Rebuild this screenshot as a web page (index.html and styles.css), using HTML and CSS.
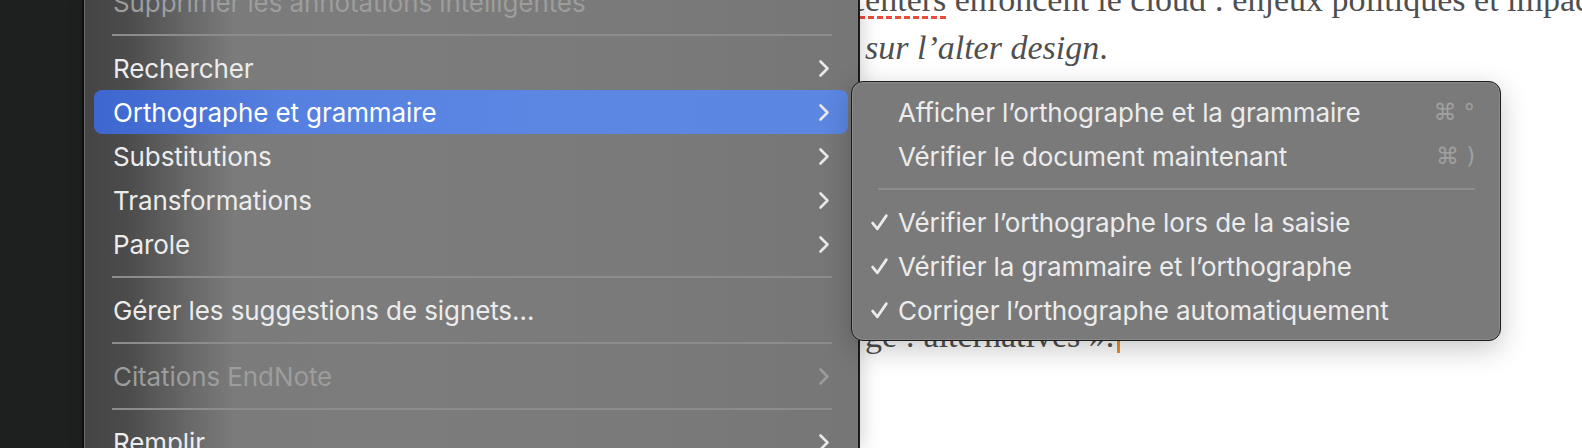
FILE: index.html
```html
<!DOCTYPE html>
<html lang="fr">
<head>
  <meta charset="UTF-8">
  <meta name="viewport" content="width=device-width, initial-scale=1.0">
  <title>Orthographe et grammaire</title>
  <link rel="stylesheet" href="styles.css">
</head>
<body>
  <div class="sidebar"></div>

  <div class="menu">
    <ul class="menu-list">
      <li class="item disabled"><span>Supprimer les annotations intelligentes</span></li>
      <li class="sep"></li>
      <li class="item"><span>Rechercher</span>
        <svg class="chevron" viewBox="0 0 12 18"><path d="M2.5 2 L9.5 9 L2.5 16"/></svg></li>
      <li class="item active"><span>Orthographe et grammaire</span>
        <svg class="chevron" viewBox="0 0 12 18"><path d="M2.5 2 L9.5 9 L2.5 16"/></svg></li>
      <li class="item"><span>Substitutions</span>
        <svg class="chevron" viewBox="0 0 12 18"><path d="M2.5 2 L9.5 9 L2.5 16"/></svg></li>
      <li class="item"><span>Transformations</span>
        <svg class="chevron" viewBox="0 0 12 18"><path d="M2.5 2 L9.5 9 L2.5 16"/></svg></li>
      <li class="item"><span>Parole</span>
        <svg class="chevron" viewBox="0 0 12 18"><path d="M2.5 2 L9.5 9 L2.5 16"/></svg></li>
      <li class="sep"></li>
      <li class="item"><span>Gérer les suggestions de signets…</span></li>
      <li class="sep"></li>
      <li class="item disabled"><span>Citations EndNote</span>
        <svg class="chevron" viewBox="0 0 12 18"><path d="M2.5 2 L9.5 9 L2.5 16"/></svg></li>
      <li class="sep"></li>
      <li class="item"><span>Remplir</span>
        <svg class="chevron" viewBox="0 0 12 18"><path d="M2.5 2 L9.5 9 L2.5 16"/></svg></li>
    </ul>
  </div>

  <div class="doc">
    <div class="doc-text">
      <p class="line first"><span class="misspelled">centers</span> enfoncent le cloud : enjeux politiques et impacts</p>
      <p class="line"><em>sur l’alter design</em>.</p>
      <p class="line last">ge : alternatives ».<span class="caret"></span></p>
    </div>
  </div>

  <div class="submenu">
    <ul class="sub-list">
      <li class="sub-item"><span class="check"></span><span class="label">Afficher l’orthographe et la grammaire</span><span class="shortcut">⌘ °</span></li>
      <li class="sub-item"><span class="check"></span><span class="label">Vérifier le document maintenant</span><span class="shortcut">⌘ )</span></li>
      <li class="sub-sep"></li>
      <li class="sub-item"><span class="check"><svg viewBox="0 0 18 18"><path d="M2.5 9.5 L7 15 L15.5 2.5"/></svg></span><span class="label">Vérifier l’orthographe lors de la saisie</span></li>
      <li class="sub-item"><span class="check"><svg viewBox="0 0 18 18"><path d="M2.5 9.5 L7 15 L15.5 2.5"/></svg></span><span class="label">Vérifier la grammaire et l’orthographe</span></li>
      <li class="sub-item"><span class="check"><svg viewBox="0 0 18 18"><path d="M2.5 9.5 L7 15 L15.5 2.5"/></svg></span><span class="label">Corriger l’orthographe automatiquement</span></li>
    </ul>
  </div>
</body>
</html>
```

FILE: styles.css
```css
* {
  box-sizing: border-box;
}

body {
  margin: 0;
  height: 448px;
  overflow: hidden;
  display: flex;
  background-color: #1e201f;
  font-family: 'Inter', 'DejaVu Sans', sans-serif;
}

ul {
  list-style: none;
  margin: 0;
  padding: 0;
}

.sidebar {
  width: 82px;
  flex-shrink: 0;
  background-color: #1e201f;
}

.menu {
  width: 776px;
  flex-shrink: 0;
  border-left: 2px solid #0d0d0d;
  box-shadow: inset 1px 0 0 #6a6b6a, 4px 0 18px rgba(0, 0, 0, 0.18);
  background: linear-gradient(90deg, #434443 0, #4b4c4b 45px, #656665 100px, #7a7b7a 150px, #7c7c7c 300px, #7a7a7a 560px, #767676 100%);
  position: relative;
  z-index: 1;
}

.menu-list {
  margin-top: -20px;
}

.item {
  height: 44px;
  margin: 0 10px;
  padding: 0 18px 0 19px;
  display: flex;
  align-items: center;
  justify-content: space-between;
  color: #ececec;
  font-size: 26px;
  letter-spacing: -0.1px;
  border-radius: 8px;
}

.item.disabled {
  color: #9d9d9d;
}

.item.active {
  background: linear-gradient(90deg, #3d66cf 0, #5580df 25%, #5c87e3 60%, #5b86e2 100%);
  color: #ffffff;
}

.chevron {
  width: 12px;
  height: 19px;
  fill: none;
  stroke: #e8e8e8;
  stroke-width: 2.6;
  stroke-linecap: round;
  stroke-linejoin: round;
}

.disabled .chevron {
  stroke: #9a9a9a;
}

.sep {
  height: 22px;
  margin: 0 26px 0 28px;
  display: flex;
  align-items: center;
}

.sep::after {
  content: "";
  flex: 1;
  height: 2px;
  background-color: #8c8c8c;
}

.doc {
  flex: 1;
  background-color: #ffffff;
  border-left: 2px solid #1e1e1e;
  overflow: hidden;
  color: #4f4f4f;
  font-family: 'Liberation Serif', serif;
}

.doc-text {
  margin-top: -24px;
  padding-left: 5px;
}

.line {
  margin: 0;
  font-size: 34px;
  line-height: 48px;
  white-space: nowrap;
}

.line.first {
  margin-left: -15px;
}

.line.last {
  margin-top: 240px;
}

.misspelled {
  text-decoration: underline dashed #e94b3c;
  text-decoration-thickness: 3px;
  text-underline-offset: 5px;
}

.caret {
  display: inline-block;
  width: 3px;
  height: 14px;
  margin-left: 3px;
  background-color: #e8912a;
  vertical-align: -6px;
}

.submenu {
  position: absolute;
  left: 851px;
  top: 81px;
  width: 650px;
  height: 260px;
  padding-top: 8px;
  border: 1px solid #1c1c1c;
  border-radius: 12px;
  background-color: #7a7a7a;
  box-shadow: inset 0 0 0 1px rgba(255, 255, 255, 0.12), 0 8px 28px rgba(0, 0, 0, 0.22);
  z-index: 2;
}

.sub-item {
  height: 44px;
  display: flex;
  align-items: center;
  padding: 0 25px 0 18px;
  color: #ececec;
  font-size: 26px;
  letter-spacing: -0.1px;
}

.check {
  width: 28px;
  height: 20px;
  flex-shrink: 0;
  display: flex;
  align-items: center;
}

.check svg {
  display: block;
  width: 19px;
  height: 19px;
  fill: none;
  stroke: #ececec;
  stroke-width: 2.6;
  stroke-linecap: round;
  stroke-linejoin: round;
}

.label {
  flex: 1;
}

.shortcut {
  color: #a0a0a0;
  font-size: 23px;
  font-family: 'DejaVu Sans', sans-serif;
}

.sub-sep {
  height: 22px;
  margin: 0 25px 0 26px;
  display: flex;
  align-items: center;
}

.sub-sep::after {
  content: "";
  flex: 1;
  height: 2px;
  background-color: #8c8c8c;
}
```
